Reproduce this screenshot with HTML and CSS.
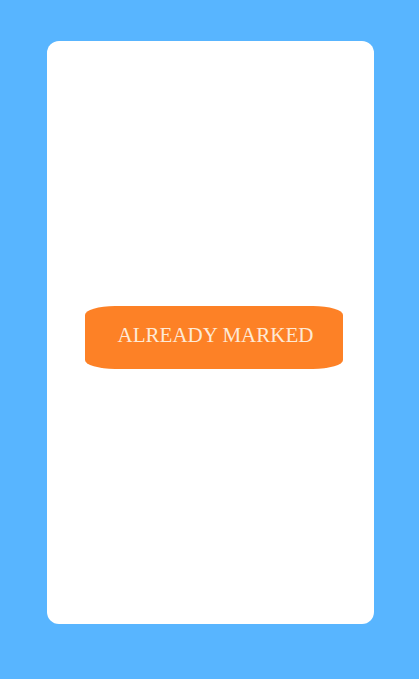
FILE: index.html
```html
<!DOCTYPE html>
<html>
<head>
<meta charset="utf-8">
<link rel="stylesheet" href="styles.css">
</head>
<body>
<div class="screen">
  <div class="card">
    <button class="marked">ALREADY MARKED</button>
  </div>
</div>
</body>
</html>
```
FILE: styles.css
```css
html, body {
  margin: 0;
  padding: 0;
  width: 419px;
  height: 679px;
  background: #58b5ff;
}
.screen {
  box-sizing: border-box;
  width: 419px;
  height: 679px;
  padding: 41px 45px 55px 47px;
}
.card {
  box-sizing: border-box;
  width: 327px;
  height: 583px;
  background: #ffffff;
  border-radius: 12px;
  display: flex;
  align-items: center;
  justify-content: center;
  padding: 10px 0 0 7px;
}
.marked {
  width: 258px;
  height: 63px;
  border: none;
  background: #fd8126;
  color: #fde9d6;
  font-family: "Liberation Serif", serif;
  font-size: 21px;
  border-radius: 30px / 9px;
  padding: 0 0 4px 3px;
}
```
